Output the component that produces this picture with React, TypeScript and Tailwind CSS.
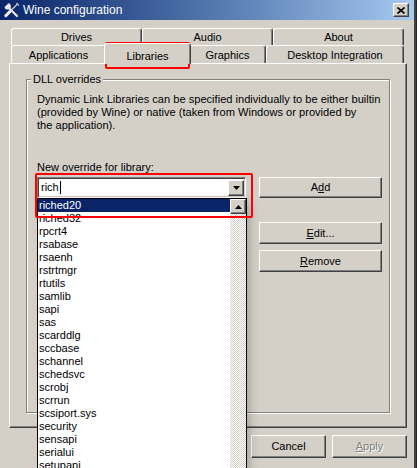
import React from "react";

const dlls = [
  "riched20",
  "riched32",
  "rpcrt4",
  "rsabase",
  "rsaenh",
  "rstrtmgr",
  "rtutils",
  "samlib",
  "sapi",
  "sas",
  "scarddlg",
  "sccbase",
  "schannel",
  "schedsvc",
  "scrobj",
  "scrrun",
  "scsiport.sys",
  "security",
  "sensapi",
  "serialui",
  "setupapi",
];

const raised =
  "border border-t-white border-l-white border-r-[#404040] border-b-[#404040] shadow-[inset_-1px_-1px_0_#808080] bg-[#d4d0c8]";

function Button({ children, className = "" }: { children: React.ReactNode; className?: string }) {
  return (
    <button className={`${raised} flex items-center justify-center text-[11px] leading-[13px] ${className}`}>
      {children}
    </button>
  );
}

function Tab({ label, w, selected }: { label: string; w: string; selected?: boolean }) {
  if (selected) {
    return (
      <div
        className={`${w} relative z-10 -mx-[2px] -mt-[2px] flex h-[21px] items-start justify-center rounded-t-[3px] border-l border-r border-t border-l-white border-t-white border-r-[#404040] bg-[#d4d0c8] pt-[6px] shadow-[inset_-1px_0_0_#808080]`}
      >
        <span className="leading-[13px]">{label}</span>
      </div>
    );
  }
  return (
    <div
      className={`${w} flex h-full items-center justify-center rounded-t-[3px] border-l border-r border-t border-l-white border-t-white border-r-[#404040] pt-[1px] shadow-[inset_-1px_0_0_#808080]`}
    >
      {label}
    </div>
  );
}

function ArrowBox({ up, className = "" }: { up?: boolean; className?: string }) {
  return (
    <div className={`${raised} flex items-center justify-center ${className}`}>
      <svg width="7" height="4" viewBox="0 0 7 4">
        {up ? <path d="M3.5 0 L7 4 L0 4 Z" fill="#000" /> : <path d="M0 0 L7 0 L3.5 4 Z" fill="#000" />}
      </svg>
    </div>
  );
}

export default function App() {
  return (
    <div className="relative flex h-[468px] w-[417px] overflow-hidden bg-[#262626] font-['Liberation_Sans',Arial,sans-serif] text-[11px] leading-[13px] text-black">
      {/* window */}
      <div className="flex h-[480px] w-[416px] shrink-0 flex-col border-r-2 border-r-[#404040] bg-[#d4d0c8]">
        {/* title bar */}
        <div className="flex h-[20px] shrink-0 items-center bg-linear-to-r from-[#0a246a] to-[#a6caf0] pl-[3px] pr-[3px]">
          <svg width="17" height="17" viewBox="0 0 17 17" className="shrink-0">
            <path d="M4 4 L14 14" stroke="#e8e8e8" strokeWidth="2.2" strokeLinecap="round" />
            <path d="M1.5 4.5 A3.2 3.2 0 1 0 5 1.2 L4 3.2 L3.4 4 Z" fill="#e8e8e8" />
            <path d="M14.5 2 L6 10.5" stroke="#cfcfcf" strokeWidth="1.3" />
            <path d="M7 9.5 L2.8 13.7" stroke="#f2f2f2" strokeWidth="3" strokeLinecap="round" />
            <path d="M13.5 1 L16 3.5" stroke="#bbbbbb" strokeWidth="1.3" />
          </svg>
          <span className="ml-[3px] text-[12px] leading-[14px] text-white">Wine configuration</span>
          <div
            className={`${raised} ml-auto mr-[2px] flex h-[14px] w-[16px] items-center justify-center`}
          >
            <svg width="8" height="7" viewBox="0 0 8 7">
              <path d="M0.5 0.5 L7.5 6.5 M7.5 0.5 L0.5 6.5" stroke="#000" strokeWidth="1.7" />
            </svg>
          </div>
        </div>

        {/* body */}
        <div className="flex flex-col pl-[9px] pt-[8px]">
          {/* tab rows */}
          <div className="ml-[2px] flex h-[17px] w-[393px]">
            <Tab label="Drives" w="w-[131px]" />
            <Tab label="Audio" w="w-[131px]" />
            <Tab label="About" w="w-[131px]" />
          </div>
          <div className="ml-[2px] flex h-[18px] w-[393px] items-start">
            <Tab label="Applications" w="w-[95px]" />
            <Tab label="Libraries" w="w-[87px]" selected />
            <Tab label="Graphics" w="w-[77px]" />
            <Tab label="Desktop Integration" w="w-[138px]" />
          </div>

          {/* tab panel */}
          <div className="h-[365px] w-[398px] border border-t-white border-l-white border-r-[#404040] border-b-[#404040] shadow-[inset_-1px_-1px_0_#808080]">
            <div className="relative ml-[16px] mt-[15px] h-[334px] w-[364px] border border-[#808080] pl-[10px] pt-[13px] shadow-[inset_1px_1px_0_#fff,1px_1px_0_#fff]">
              <span className="absolute -top-[7px] left-[4px] bg-[#d4d0c8] px-[2px]">DLL overrides</span>
              <p className="text-[11.1px]">
                Dynamic Link Libraries can be specified individually to be either builtin
                <br />
                (provided by Wine) or native (taken from Windows or provided by
                <br />
                the application).
              </p>

              <div className="mt-[29px] flex gap-[13px]">
                <div className="flex w-[209px] flex-col">
                  <span>New override for library:</span>
                  <div className="mt-[3px] flex h-[21px] items-center border border-t-[#808080] border-l-[#808080] border-b-white border-r-white bg-white pl-[3px] pr-[1px] shadow-[inset_1px_1px_0_#404040,inset_-1px_-1px_0_#d4d0c8]">
                    <span>rich</span>
                    <span className="ml-[1px] h-[13px] w-[1px] bg-black" />
                    <ArrowBox className="ml-auto h-[16px] w-[16px]" />
                  </div>
                  <span className="mt-[10px]">Existing overrides:</span>
                  <div className="mt-[3px] h-[150px] border border-t-[#808080] border-l-[#808080] border-b-white border-r-white bg-white" />
                </div>
                <div className="flex w-[123px] flex-col pt-[16px]">
                  <Button className="h-[21px]">
                    A<span className="underline">d</span>d
                  </Button>
                  <Button className="mt-[24px] h-[22px]">
                    <span className="underline">E</span>dit...
                  </Button>
                  <Button className="mt-[6px] h-[22px]">
                    <span className="underline">R</span>emove
                  </Button>
                </div>
              </div>
            </div>
          </div>

          {/* dialog buttons */}
          <div className="mt-[7px] flex w-[398px] justify-end gap-[6px]">
            <Button className="h-[23px] w-[75px]">OK</Button>
            <Button className="h-[23px] w-[75px]">Cancel</Button>
            <Button className="h-[23px] w-[75px] text-[#808080] [text-shadow:1px_1px_0_#fff]">
              <span className="underline">A</span>pply
            </Button>
          </div>
        </div>
      </div>

      {/* open combo dropdown */}
      <div className="absolute left-[37px] top-[198px] flex h-[290px] w-[210px] border border-black bg-white shadow-[6px_0_10px_-4px_rgba(0,0,0,0.25)]">
        <div className="flex flex-1 flex-col">
          {dlls.map((d, i) => (
            <div
              key={d}
              className={`h-[13px] shrink-0 pl-[1px] ${i === 0 ? "bg-[#0a246a] text-white" : "text-[#000]"}`}
            >
              {d}
            </div>
          ))}
        </div>
        <div className="flex w-[16px] flex-col bg-[repeating-conic-gradient(#d4d0c8_0_25%,#ffffff_0_50%)] bg-[length:2px_2px]">
          <ArrowBox up className="h-[15px] w-[16px]" />
        </div>
      </div>

      {/* annotation boxes */}
      <div className="pointer-events-none absolute left-[105px] top-[42px] h-[27px] w-[85px] rounded-[2px] border-2 border-[#ff0000]" />
      <div className="pointer-events-none absolute left-[35px] top-[173px] h-[45px] w-[218px] rounded-[2px] border-2 border-[#ff0000]" />
    </div>
  );
}
